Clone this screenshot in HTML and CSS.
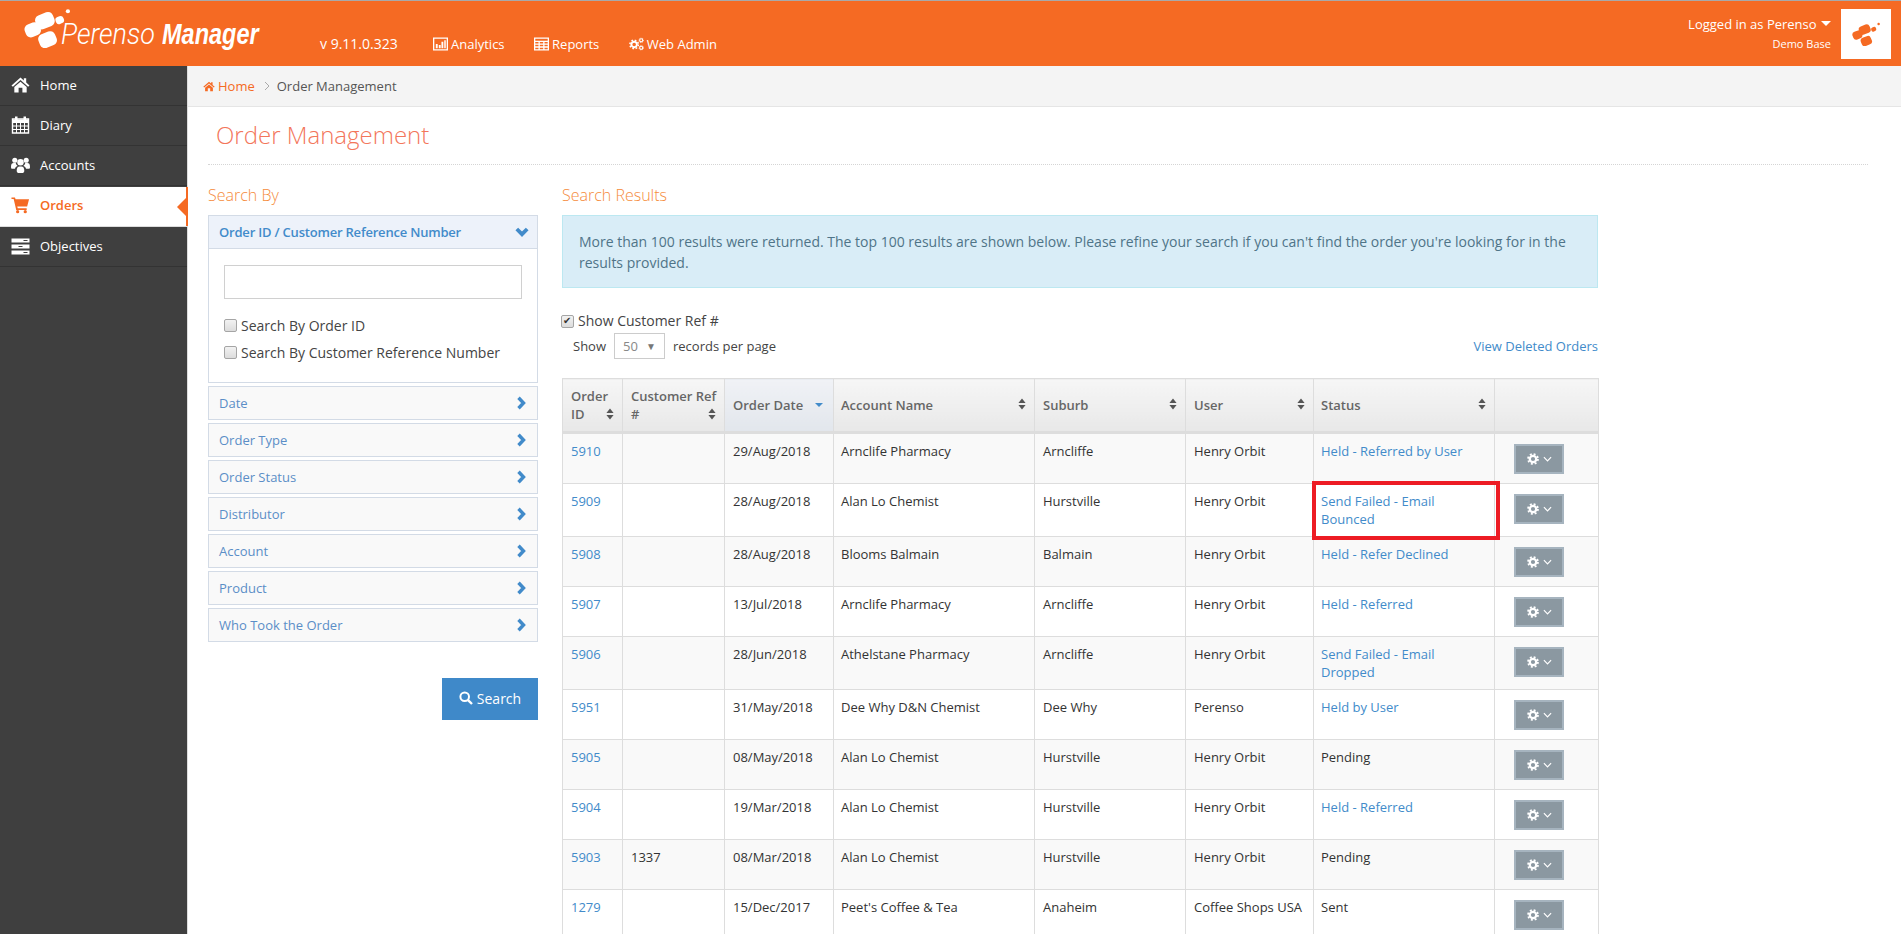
FILE: index.html
```html
<!DOCTYPE html>
<html lang="en">
<head>
<meta charset="utf-8">
<title>Order Management</title>
<link rel="stylesheet" href="styles.css">
</head>
<body>
<svg class="sprite" aria-hidden="true">
  <symbol id="gear" viewBox="0 0 16 16"><circle cx="8" cy="8" r="4.3" fill="none" stroke="currentColor" stroke-width="3"/><circle cx="8" cy="8" r="6.6" fill="none" stroke="currentColor" stroke-width="2.4" stroke-dasharray="2.6 2.6"/></symbol>
  <symbol id="sort" viewBox="0 0 8 12"><path d="M4 0.5 7.6 5H.4ZM4 11.5.4 7h7.2Z" fill="currentColor"/></symbol>
  <symbol id="right" viewBox="0 0 10 14"><path d="M2.5 1.8 7.5 7 2.5 12.2" fill="none" stroke="currentColor" stroke-width="3.4"/></symbol>
  <symbol id="mark" viewBox="0 0 44 38"><g fill="currentColor"><rect x="11" y="5" width="18" height="14" rx="5" transform="rotate(-22 20 12)"/><rect x="1" y="14" width="15" height="13" rx="5" transform="rotate(-22 9 21)"/><rect x="14" y="23" width="17" height="14" rx="5" transform="rotate(-22 23 30)"/><rect x="30" y="8" width="8" height="7" rx="3" transform="rotate(-22 34 11)"/><circle cx="42" cy="3" r="2"/></g></symbol>
</svg>
<header class="topbar">
  <div class="brand">
    <svg class="brand-mark"><use href="#mark"/></svg>
    <span class="brand-word brand-light">Perenso</span>
    <span class="brand-word brand-bold">Manager</span>
  </div>
  <span class="version">v 9.11.0.323</span>
  <nav class="topnav">
    <a class="topnav-item"><svg class="ico14" viewBox="0 0 16 14"><path d="M.7.7h14.6v12.6H.7Z" fill="none" stroke="currentColor" stroke-width="1.4"/><path d="M3 7h2v4.500H3ZM6.200 8h2v3.500h-2ZM9 4.500h2v7H9ZM12 3h1.600v8.500H12Z" fill="currentColor"/></svg>Analytics</a>
    <a class="topnav-item"><svg class="ico14" viewBox="0 0 14 12"><path d="M.6.6h12.8v10.800H.6ZM.6 3.600h12.800M.6 6.200h12.800M.6 8.800h12.800M4.800 3.600v7.800M9.200 3.600v7.800" fill="none" stroke="currentColor" stroke-width="1.200"/></svg>Reports</a>
    <a class="topnav-item"><svg class="ico14" viewBox="0 0 16 14"><use href="#gear" x="0" y="2" width="11" height="11"/><use href="#gear" x="10" y="0" width="6" height="6"/><use href="#gear" x="10" y="8" width="6" height="6"/></svg>Web Admin</a>
  </nav>
  <div class="account">
    <div class="account-text">
      <div class="account-name">Logged in as Perenso <span class="caret"></span></div>
      <div class="account-base">Demo Base</div>
    </div>
    <div class="avatar"><svg class="avatar-mark"><use href="#mark"/></svg></div>
  </div>
</header>
<div class="layout">
  <aside class="sidebar">
    <a class="side-item"><svg class="side-ico" viewBox="0 0 20 18"><path d="M10 1 .5 9.500 2 10.800l8-7 8 7 1.500-1.300L16 6.400V2h-2.500v2.200ZM10 5.500 3.500 11v6H8v-5h4v5h4.500v-6Z" fill="currentColor"/></svg>Home</a>
    <a class="side-item"><svg class="side-ico" viewBox="0 0 18 18"><path d="M1 3h16v14H1Z" fill="none" stroke="currentColor" stroke-width="1.400"/><path d="M1 6.500h16M1 10h16M1 13.500h16M5 6.500V17M9 6.500V17M13 6.500V17" stroke="currentColor" stroke-width="1"/><path d="M3.500.5h2.500v4H3.500ZM12 .5h2.500v4H12ZM1 3.500h16v3H1Z" fill="currentColor"/></svg>Diary</a>
    <a class="side-item"><svg class="side-ico" viewBox="0 0 20 18"><g fill="currentColor"><circle cx="4" cy="4" r="2.700"/><circle cx="16" cy="4" r="2.700"/><circle cx="10" cy="6" r="3.400"/><path d="M0 11c0-3 1-4 3-4h2c.4 1.500 1 2.200 2 3-2 .6-2.600 1.800-2.800 3H1.500C.5 13 0 12.200 0 11ZM20 11c0-3-1-4-3-4h-2c-.4 1.500-1 2.200-2 3 2 .6 2.600 1.800 2.800 3h2.700c1 0 1.500-.8 1.500-2ZM6 15c0-3 1-4.500 3-4.500h2c2 0 3 1.500 3 4.500 0 1.500-1 2.500-2.500 2.500h-3C7 17.500 6 16.500 6 15Z"/></g></svg>Accounts</a>
    <a class="side-item side-active"><svg class="side-ico" viewBox="0 0 20 18"><path d="M.5 1h3.700l.6 2H19l-2 7.500H6.600l.5 2H16.500v1.800H5.500L2.800 2.800H.5Z" fill="currentColor"/><circle cx="7" cy="16" r="1.700" fill="currentColor"/><circle cx="15" cy="16" r="1.700" fill="currentColor"/></svg>Orders</a>
    <a class="side-item"><svg class="side-ico" viewBox="0 0 18 18"><path d="M0 1.500h18v4H0ZM0 7.500h18v4H0ZM0 13.500h18v4H0Z" fill="currentColor"/><path d="M12 3h4v1h-4ZM7 9h4v1H7ZM12 15h4v1h-4Z" fill="#3f3f3f"/></svg>Objectives</a>
  </aside>
  <main class="content">
    <div class="crumbs">
      <svg class="crumb-home" viewBox="0 0 20 18"><path d="M10 1 .5 9.500 2 10.800l8-7 8 7 1.500-1.300L16 6.400V2h-2.500v2.200ZM10 5.500 3.500 11v6H8v-5h4v5h4.500v-6Z" fill="currentColor"/></svg>
      <a class="crumb-link">Home</a>
      <svg class="crumb-sep" viewBox="0 0 6 10"><path d="M1 1 5 5 1 9" fill="none" stroke="currentColor" stroke-width="1"/></svg>
      <span>Order Management</span>
    </div>
    <div class="page">
      <h1 class="page-title">Order Management</h1>
      <div class="columns">
        <section class="col-search">
          <h2 class="section-title">Search By</h2>
          <div class="acc-open">
            <div class="acc-head"><span>Order ID / Customer Reference Number</span><svg class="chev-down" viewBox="0 0 14 10"><path d="M1.800 2 7 7.200 12.200 2" fill="none" stroke="currentColor" stroke-width="3.800"/></svg></div>
            <div class="acc-body">
              <div class="text-input"></div>
              <label class="check-row"><input type="checkbox">Search By Order ID</label>
              <label class="check-row"><input type="checkbox">Search By Customer Reference Number</label>
            </div>
          </div>
          <div class="acc-row"><span>Date</span><svg class="chev-right"><use href="#right"/></svg></div>
          <div class="acc-row"><span>Order Type</span><svg class="chev-right"><use href="#right"/></svg></div>
          <div class="acc-row"><span>Order Status</span><svg class="chev-right"><use href="#right"/></svg></div>
          <div class="acc-row"><span>Distributor</span><svg class="chev-right"><use href="#right"/></svg></div>
          <div class="acc-row"><span>Account</span><svg class="chev-right"><use href="#right"/></svg></div>
          <div class="acc-row"><span>Product</span><svg class="chev-right"><use href="#right"/></svg></div>
          <div class="acc-row"><span>Who Took the Order</span><svg class="chev-right"><use href="#right"/></svg></div>
          <div class="search-actions">
            <button class="search-btn"><svg class="search-ico" viewBox="0 0 14 14"><circle cx="5.700" cy="5.700" r="4.300" fill="none" stroke="currentColor" stroke-width="2"/><path d="M8.800 8.800 13 13" stroke="currentColor" stroke-width="2.400"/></svg>Search</button>
          </div>
        </section>
        <section class="col-results">
          <h2 class="section-title">Search Results</h2>
          <div class="alert">More than 100 results were returned. The top 100 results are shown below. Please refine your search if you can't find the order you're looking for in the results provided.</div>
          <label class="show-ref"><input type="checkbox" checked>Show Customer Ref #</label>
          <div class="table-tools">
            <div class="per-page">Show <span class="select"><span>50</span><span class="select-arrow">▼</span></span> records per page</div>
            <a class="link">View Deleted Orders</a>
          </div>
          <table class="orders">
            <colgroup><col class="c1"><col class="c2"><col class="c3"><col class="c4"><col class="c5"><col class="c6"><col class="c7"><col class="c8"></colgroup>
            <thead>
              <tr>
                <th><div class="th-in th-end"><span class="th-label">Order ID</span><svg class="sort"><use href="#sort"/></svg></div></th>
                <th><div class="th-in th-end"><span class="th-label">Customer Ref #</span><svg class="sort"><use href="#sort"/></svg></div></th>
                <th class="th-sorted"><div class="th-in"><span>Order Date</span><span class="sort-down"></span></div></th>
                <th><div class="th-in"><span>Account Name</span><svg class="sort"><use href="#sort"/></svg></div></th>
                <th><div class="th-in"><span>Suburb</span><svg class="sort"><use href="#sort"/></svg></div></th>
                <th><div class="th-in"><span>User</span><svg class="sort"><use href="#sort"/></svg></div></th>
                <th><div class="th-in"><span>Status</span><svg class="sort"><use href="#sort"/></svg></div></th>
                <th></th>
              </tr>
            </thead>
            <tbody>
              <tr><td><a class="link">5910</a></td><td></td><td>29/Aug/2018</td><td>Arnclife Pharmacy</td><td>Arncliffe</td><td>Henry Orbit</td><td><a class="link">Held - Referred by User</a></td><td class="act"><button class="gear-btn"><svg class="gear"><use href="#gear"/></svg><svg class="gear-chev" viewBox="0 0 10 6"><path d="M1 1 5 5 9 1" fill="none" stroke="currentColor" stroke-width="1.300"/></svg></button></td></tr>
              <tr><td><a class="link">5909</a></td><td></td><td>28/Aug/2018</td><td>Alan Lo Chemist</td><td>Hurstville</td><td>Henry Orbit</td><td class="flagged"><a class="link">Send Failed - Email Bounced</a></td><td class="act"><button class="gear-btn"><svg class="gear"><use href="#gear"/></svg><svg class="gear-chev" viewBox="0 0 10 6"><path d="M1 1 5 5 9 1" fill="none" stroke="currentColor" stroke-width="1.300"/></svg></button></td></tr>
              <tr><td><a class="link">5908</a></td><td></td><td>28/Aug/2018</td><td>Blooms Balmain</td><td>Balmain</td><td>Henry Orbit</td><td><a class="link">Held - Refer Declined</a></td><td class="act"><button class="gear-btn"><svg class="gear"><use href="#gear"/></svg><svg class="gear-chev" viewBox="0 0 10 6"><path d="M1 1 5 5 9 1" fill="none" stroke="currentColor" stroke-width="1.300"/></svg></button></td></tr>
              <tr><td><a class="link">5907</a></td><td></td><td>13/Jul/2018</td><td>Arnclife Pharmacy</td><td>Arncliffe</td><td>Henry Orbit</td><td><a class="link">Held - Referred</a></td><td class="act"><button class="gear-btn"><svg class="gear"><use href="#gear"/></svg><svg class="gear-chev" viewBox="0 0 10 6"><path d="M1 1 5 5 9 1" fill="none" stroke="currentColor" stroke-width="1.300"/></svg></button></td></tr>
              <tr><td><a class="link">5906</a></td><td></td><td>28/Jun/2018</td><td>Athelstane Pharmacy</td><td>Arncliffe</td><td>Henry Orbit</td><td><a class="link">Send Failed - Email Dropped</a></td><td class="act"><button class="gear-btn"><svg class="gear"><use href="#gear"/></svg><svg class="gear-chev" viewBox="0 0 10 6"><path d="M1 1 5 5 9 1" fill="none" stroke="currentColor" stroke-width="1.300"/></svg></button></td></tr>
              <tr><td><a class="link">5951</a></td><td></td><td>31/May/2018</td><td>Dee Why D&amp;N Chemist</td><td>Dee Why</td><td>Perenso</td><td><a class="link">Held by User</a></td><td class="act"><button class="gear-btn"><svg class="gear"><use href="#gear"/></svg><svg class="gear-chev" viewBox="0 0 10 6"><path d="M1 1 5 5 9 1" fill="none" stroke="currentColor" stroke-width="1.300"/></svg></button></td></tr>
              <tr><td><a class="link">5905</a></td><td></td><td>08/May/2018</td><td>Alan Lo Chemist</td><td>Hurstville</td><td>Henry Orbit</td><td>Pending</td><td class="act"><button class="gear-btn"><svg class="gear"><use href="#gear"/></svg><svg class="gear-chev" viewBox="0 0 10 6"><path d="M1 1 5 5 9 1" fill="none" stroke="currentColor" stroke-width="1.300"/></svg></button></td></tr>
              <tr><td><a class="link">5904</a></td><td></td><td>19/Mar/2018</td><td>Alan Lo Chemist</td><td>Hurstville</td><td>Henry Orbit</td><td><a class="link">Held - Referred</a></td><td class="act"><button class="gear-btn"><svg class="gear"><use href="#gear"/></svg><svg class="gear-chev" viewBox="0 0 10 6"><path d="M1 1 5 5 9 1" fill="none" stroke="currentColor" stroke-width="1.300"/></svg></button></td></tr>
              <tr><td><a class="link">5903</a></td><td>1337</td><td>08/Mar/2018</td><td>Alan Lo Chemist</td><td>Hurstville</td><td>Henry Orbit</td><td>Pending</td><td class="act"><button class="gear-btn"><svg class="gear"><use href="#gear"/></svg><svg class="gear-chev" viewBox="0 0 10 6"><path d="M1 1 5 5 9 1" fill="none" stroke="currentColor" stroke-width="1.300"/></svg></button></td></tr>
              <tr><td><a class="link">1279</a></td><td></td><td>15/Dec/2017</td><td>Peet's Coffee &amp; Tea</td><td>Anaheim</td><td>Coffee Shops USA</td><td>Sent</td><td class="act"><button class="gear-btn"><svg class="gear"><use href="#gear"/></svg><svg class="gear-chev" viewBox="0 0 10 6"><path d="M1 1 5 5 9 1" fill="none" stroke="currentColor" stroke-width="1.300"/></svg></button></td></tr>
            </tbody>
          </table>
        </section>
      </div>
    </div>
  </main>
</div>
</body>
</html>
```
FILE: styles.css
```css
* { box-sizing: border-box; }
html, body { margin: 0; height: 100%; overflow: hidden; }
body { font-family: "Open Sans", sans-serif; font-size: 13px; line-height: 18px; color: #333; background: #fff; display: flex; flex-direction: column; }
.sprite { position: absolute; width: 0; height: 0; }
a { text-decoration: none; }

.topbar { flex: none; height: 66px; background: #f56a23; border-top: 1px solid #a9a9a9; color: #fff; display: flex; align-items: center; }
.brand { width: 320px; height: 100%; display: flex; align-items: center; padding: 1px 0 0 24px; flex: none; }
.brand-mark { width: 46px; height: 40px; flex: none; margin: -12px -9px 0 0; }
.brand-word { display: inline-block; white-space: nowrap; transform-origin: left center; font-size: 29px; line-height: 34px; font-style: italic; }
.brand-light { font-family: Roboto, sans-serif; font-weight: 300; width: 101px; transform: scaleX(.93); }
.brand-bold { font-family: "Liberation Sans", sans-serif; font-weight: 700; width: 96px; transform: scaleX(.81); }
.version { font-size: 14px; margin-top: 20px; width: 113px; flex: none; }
.topnav { display: flex; gap: 29.5px; margin-top: 20px; }
.topnav-item { color: #fff; display: flex; align-items: center; gap: 3px; }
.ico14 { width: 15px; height: 14px; flex: none; }
.account { margin-left: auto; display: flex; align-items: center; height: 100%; padding-right: 10px; }
.account-text { text-align: right; margin-right: 10px; }
.account-name { line-height: 20px; }
.account-base { font-size: 11px; line-height: 20px; }
.caret { display: inline-block; width: 0; height: 0; border: 5px solid transparent; border-top: 5px solid #fff; border-bottom: 0; vertical-align: 3px; margin-left: 1px; }
.avatar { width: 50px; height: 50px; background: #fff; color: #f56a23; display: flex; align-items: center; justify-content: center; }
.avatar-mark { width: 28px; height: 24px; }

.layout { flex: 1; min-height: 0; display: flex; }
.sidebar { width: 188px; flex: none; background: #3f3f3f; border-right: 1px solid #ddd; }
.side-item { height: 40px; display: flex; align-items: center; gap: 10px; padding: 0 0 2px 11px; color: #fff; border-bottom: 1px solid #333; position: relative; }
.side-ico { width: 19px; height: 18px; flex: none; }
.side-active { background: #fff; color: #f56a23; font-weight: 600; margin: 1px -1px 0 0; padding-bottom: 4px; border-bottom: 1px solid #ddd; }
.side-active::before { content: ""; position: absolute; right: 1px; top: 10px; border: 10px solid transparent; border-left: 0; border-right: 10px solid #f56a23; }
.side-active::after { content: ""; position: absolute; right: 0; top: 0; bottom: 0; width: 2px; background: #f56a23; }

.content { flex: 1; min-width: 0; display: flex; flex-direction: column; }
.crumbs { flex: none; height: 41px; background: #f4f4f4; border-bottom: 1px solid #e5e5e5; display: flex; align-items: center; padding-left: 15px; color: #555; }
.crumb-home { width: 12px; height: 11px; color: #f56a23; margin-right: 3px; }
.crumb-link { color: #f56a23; }
.crumb-sep { width: 6px; height: 10px; color: #aaa; margin: 0 7px 0 9px; }
.page { flex: 1; min-height: 0; padding: 0 33px 0 20px; }
.page-title { margin: 0 0 19px; padding: 11px 0 11px 8px; height: 58px; font-size: 24px; line-height: 34px; font-weight: 300; color: #f3765b; border-bottom: 1px dotted #d5d5d5; }
.columns { display: flex; gap: 24px; align-items: flex-start; }
.section-title { margin: 0 0 9px; font-size: 16px; line-height: 22px; font-weight: 300; color: #f58b3c; }
.col-search { width: 330px; flex: none; }
.col-results { width: 1036px; flex: none; }

.acc-open { border: 1px solid #d3dbe6; margin-bottom: 3px; }
.acc-head { height: 33px; background: #edf2fa; border-bottom: 1px solid #d3dbe6; display: flex; justify-content: space-between; align-items: center; padding: 0 8px 0 10px; color: #428bca; font-weight: 600; letter-spacing: -.2px; }
.chev-down { width: 14px; height: 10px; color: #428bca; }
.acc-body { height: 133px; padding: 16px 15px 0; }
.text-input { height: 34px; border: 1px solid #d0d0d0; margin-bottom: 13px; }
.check-row { display: flex; align-items: center; gap: 4px; height: 27px; font-size: 14px; color: #444; }
input[type=checkbox] { appearance: none; width: 13px; height: 13px; margin: 0; border: 1px solid #a5a5a5; border-radius: 2px; background: linear-gradient(#f2f2f2, #dcdcdc); position: relative; flex: none; }
input[type=checkbox]:checked::after { content: "✔"; position: absolute; left: 1px; top: -3px; font-size: 10px; line-height: 16px; color: #333; }
.acc-row { height: 34px; margin-bottom: 3px; background: #f9f9f9; border: 1px solid #d3dbe6; display: flex; justify-content: space-between; align-items: center; padding: 0 11px 0 10px; color: #5b8ec7; }
.chev-right { width: 10px; height: 14px; color: #428bca; }
.search-actions { display: flex; justify-content: flex-end; padding-top: 33px; }
.search-btn { width: 96px; height: 42px; border: 0; background: #3f89c9; color: #fff; font: 14px "Open Sans", sans-serif; display: flex; align-items: center; justify-content: center; gap: 4px; padding: 0 0 2px; }
.search-ico { width: 14px; height: 14px; }

.alert { height: 73px; background: #d9edf7; border: 1px solid #bce8f1; padding: 15px 16px; font-size: 14px; line-height: 21px; color: #4f7488; margin-bottom: 24px; }
.show-ref { display: flex; align-items: center; gap: 4px; height: 18px; margin: 0 0 1px -1px; font-size: 14px; color: #444; }
.table-tools { display: flex; justify-content: space-between; align-items: center; height: 30px; padding-left: 11px; margin-bottom: 17px; }
.per-page { display: flex; align-items: center; gap: 8px; color: #444; }
.select { width: 51px; height: 26px; border: 1px solid #ccc; display: flex; justify-content: space-between; align-items: center; padding: 0 8px; color: #888; font-size: 13px; }
.select-arrow { font-size: 10px; color: #777; }
.link { color: #428bca; }

.orders { width: 1036px; table-layout: fixed; border-collapse: collapse; border: 1px solid #ddd; }
.c1 { width: 60px; } .c2 { width: 102px; } .c3 { width: 109px; } .c4 { width: 201px; } .c5 { width: 151px; } .c6 { width: 128px; } .c7 { width: 181px; } .c8 { width: 104px; }
.orders th { height: 54px; padding: 0 8px; background: linear-gradient(#f6f6f6, #e8e8e8); border: 1px solid #ddd; border-bottom: 3px solid #ddd; font-weight: 600; color: #666; text-align: left; }
.orders th.th-sorted { background: linear-gradient(#f0f2f6, #e2e6ec); }
.th-in { display: flex; justify-content: space-between; align-items: center; }
.th-end { align-items: flex-end; }
.th-label { margin-right: -10px; }
.sort { width: 8px; height: 12px; color: #555; flex: none; margin-bottom: 3px; }
.sort-down { width: 0; height: 0; border: 4px solid transparent; border-top: 4px solid #428bca; border-bottom: 0; margin-right: 2px; }
.orders td { padding: 8px 8px 8px; border: 1px solid #ddd; vertical-align: top; }
.orders td:nth-child(4), .orders td:nth-child(7), .orders th:nth-child(4), .orders th:nth-child(7) { padding-left: 7px; }
.orders tbody tr:nth-child(odd) td { background: #f9f9f9; }
.orders td.flagged { position: relative; }
.orders td.flagged::after { content: ""; position: absolute; left: -2px; right: -6px; top: -3px; bottom: -4px; border: 4px solid #ed1c24; }
.orders td.act { padding: 10px 8px 9px 19px; }
.gear-btn { width: 50px; height: 30px; background: #8b98a1; border: 2px solid #a6b4bf; color: #fff; display: flex; align-items: center; justify-content: center; gap: 4px; padding: 0; }
.gear { width: 12px; height: 12px; }
.gear-chev { width: 9px; height: 6px; }
```
